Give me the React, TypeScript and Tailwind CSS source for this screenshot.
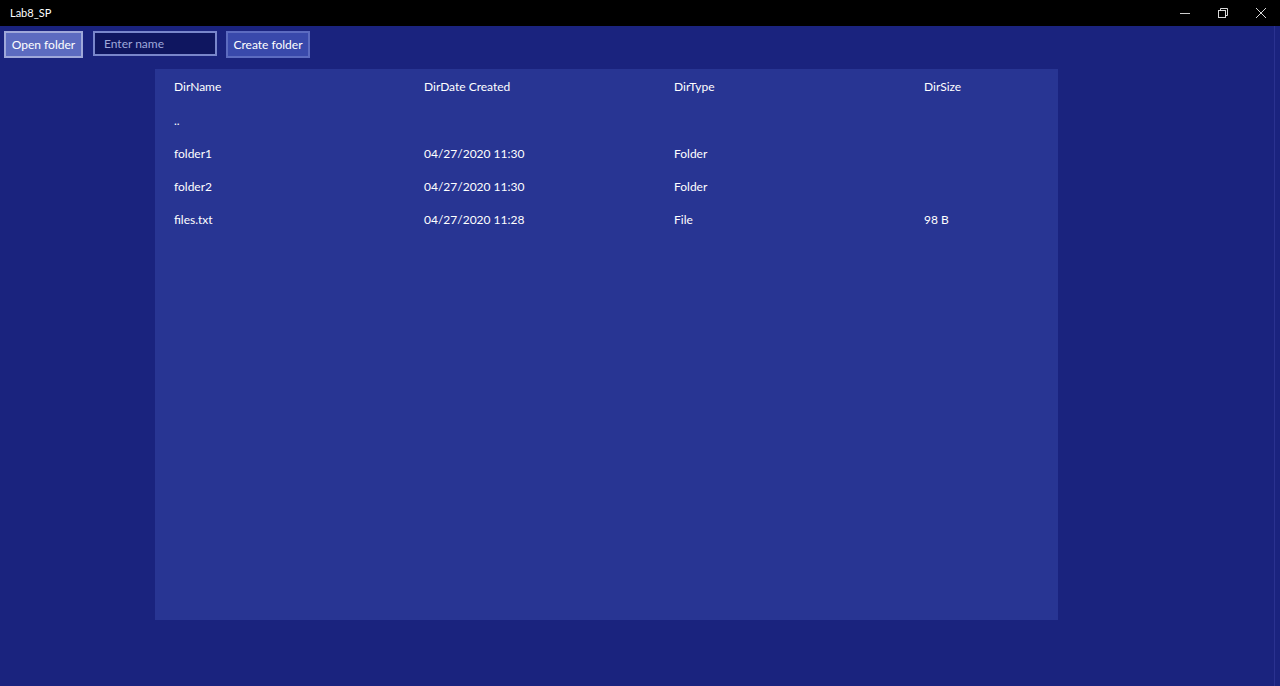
import React from "react";

const rows = [
  { name: "..", date: "", type: "", size: "" },
  { name: "folder1", date: "04/27/2020 11:30", type: "Folder", size: "" },
  { name: "folder2", date: "04/27/2020 11:30", type: "Folder", size: "" },
  { name: "files.txt", date: "04/27/2020 11:28", type: "File", size: "98 B" },
];

const App = () => {
  return (
    <div className="w-[1280px] h-[686px] flex flex-col bg-[#1a237e] font-['Lato',sans-serif] text-white overflow-hidden">
      {/* title bar */}
      <div className="h-[26px] bg-black flex items-center justify-between shrink-0">
        <span className="pl-[10px] text-[11px] text-white">Lab8_SP</span>
        <div className="flex h-full items-center">
          <div className="w-[38px] h-full flex items-center justify-center">
            <div className="w-[10px] h-px bg-white/80" />
          </div>
          <div className="w-[38px] h-full flex items-center justify-center">
            <svg width="10" height="10" viewBox="0 0 10 10" fill="none" stroke="white" strokeOpacity="0.85" strokeWidth="1">
              <rect x="0.5" y="2.5" width="7" height="7" />
              <path d="M2.5 2.5V0.5H9.5V7.5H7.5" />
            </svg>
          </div>
          <div className="w-[38px] h-full flex items-center justify-center">
            <svg width="10" height="10" viewBox="0 0 10 10" stroke="white" strokeOpacity="0.85" strokeWidth="1">
              <path d="M0 0L10 10M10 0L0 10" />
            </svg>
          </div>
        </div>
      </div>

      <div className="flex flex-1 min-h-0">
        <div className="flex-1 flex flex-col">
          {/* toolbar */}
          <div className="flex items-start gap-[10px] pl-[4px] pt-[5px] h-[43px]">
            <button className="h-[27px] w-[79px] flex items-center justify-center bg-[#5c6bc0] border-2 border-[#9fa8da] text-[12px] leading-none">
              Open folder
            </button>
            <input
              placeholder="Enter name"
              className="h-[25px] w-[124px] px-[9px] bg-[#0f1660] border-2 border-[#7986cb] text-[12px] placeholder:text-[#9fa8da] outline-none"
            />
            <button className="-ml-px h-[27px] w-[84px] flex items-center justify-center bg-[#3949ab] border-2 border-[#5c6bc0] text-[12px] leading-none">
              Create folder
            </button>
          </div>

          {/* table panel */}
          <div className="ml-[155px] w-[903px] h-[551px] bg-[#283593] pl-[19px] pt-px text-[12px]">
            <div className="grid grid-cols-[250px_250px_250px_134px] h-[34px] items-center">
              <span>DirName</span>
              <span>DirDate Created</span>
              <span>DirType</span>
              <span>DirSize</span>
            </div>
            {rows.map((r) => (
              <div key={r.name} className="grid grid-cols-[250px_250px_250px_134px] h-[33px] items-center">
                <span>{r.name}</span>
                <span>{r.date}</span>
                <span>{r.type}</span>
                <span>{r.size}</span>
              </div>
            ))}
          </div>
        </div>
        <div className="w-px mr-[5px] bg-[#2a3290]" />
      </div>
    </div>
  );
};

export default App;
